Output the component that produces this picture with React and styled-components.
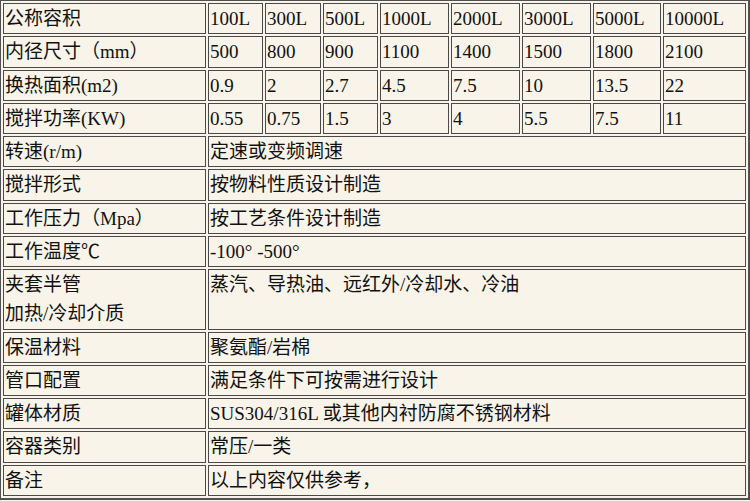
import React from 'react'
import styled, { createGlobalStyle } from 'styled-components'

const Global = createGlobalStyle`
  html, body {
    margin: 0;
    padding: 0;
    background: #f8f4e9;
  }
`

const SpecTable = styled.table`
  width: 750px;
  table-layout: fixed;
  border-collapse: separate;
  border-spacing: 2px;
  border: 1px solid #505050;
  border-right-width: 2px;
  border-bottom-width: 2px;
  background: #f8f4e9;
  font-family: "Liberation Serif", "Noto Sans CJK SC", serif;
  font-size: 19px;
  color: #111;
`

const Cell = styled.td`
  box-sizing: border-box;
  height: ${p => (p.$tall ? '60.5px' : '31.25px')};
  padding: 0 1px;
  line-height: 29px;
  border: 1px solid #4a4a4a;
  background: #f8f4e9;
  vertical-align: ${p => (p.$top ? 'top' : 'middle')};
  white-space: nowrap;
  overflow: hidden;
`

const cols = [203, 55, 56, 55, 69, 69, 69, 68, 83]

const grid = [
  ['公称容积', '100L', '300L', '500L', '1000L', '2000L', '3000L', '5000L', '10000L'],
  ['内径尺寸（mm）', '500', '800', '900', '1100', '1400', '1500', '1800', '2100'],
  ['换热面积(m2)', '0.9', '2', '2.7', '4.5', '7.5', '10', '13.5', '22'],
  ['搅拌功率(KW)', '0.55', '0.75', '1.5', '3', '4', '5.5', '7.5', '11'],
]

const wide = [
  ['转速(r/m)', '定速或变频调速'],
  ['搅拌形式', '按物料性质设计制造'],
  ['工作压力（Mpa）', '按工艺条件设计制造'],
  ['工作温度℃', '-100° -500°'],
  [['夹套半管', '加热/冷却介质'], '蒸汽、导热油、远红外/冷却水、冷油'],
  ['保温材料', '聚氨酯/岩棉'],
  ['管口配置', '满足条件下可按需进行设计'],
  ['罐体材质', 'SUS304/316L 或其他内衬防腐不锈钢材料'],
  ['容器类别', '常压/一类'],
  ['备注', '以上内容仅供参考，'],
]

export default function App() {
  return (
    <>
      <Global />
      <SpecTable>
        <colgroup>
          {cols.map((w, i) => (
            <col key={i} style={{ width: w + 'px' }} />
          ))}
        </colgroup>
        <tbody>
          {grid.map((row, r) => (
            <tr key={'g' + r}>
              {row.map((t, i) => (
                <Cell key={i}>{t}</Cell>
              ))}
            </tr>
          ))}
          {wide.map(([label, value], r) => {
            const tall = Array.isArray(label)
            return (
              <tr key={'w' + r}>
                <Cell $tall={tall} $top={tall}>
                  {tall ? (
                    <>
                      {label[0]}
                      <br />
                      {label[1]}
                    </>
                  ) : (
                    label
                  )}
                </Cell>
                <Cell colSpan={8} $tall={tall} $top={tall}>
                  {value}
                </Cell>
              </tr>
            )
          })}
        </tbody>
      </SpecTable>
    </>
  )
}
